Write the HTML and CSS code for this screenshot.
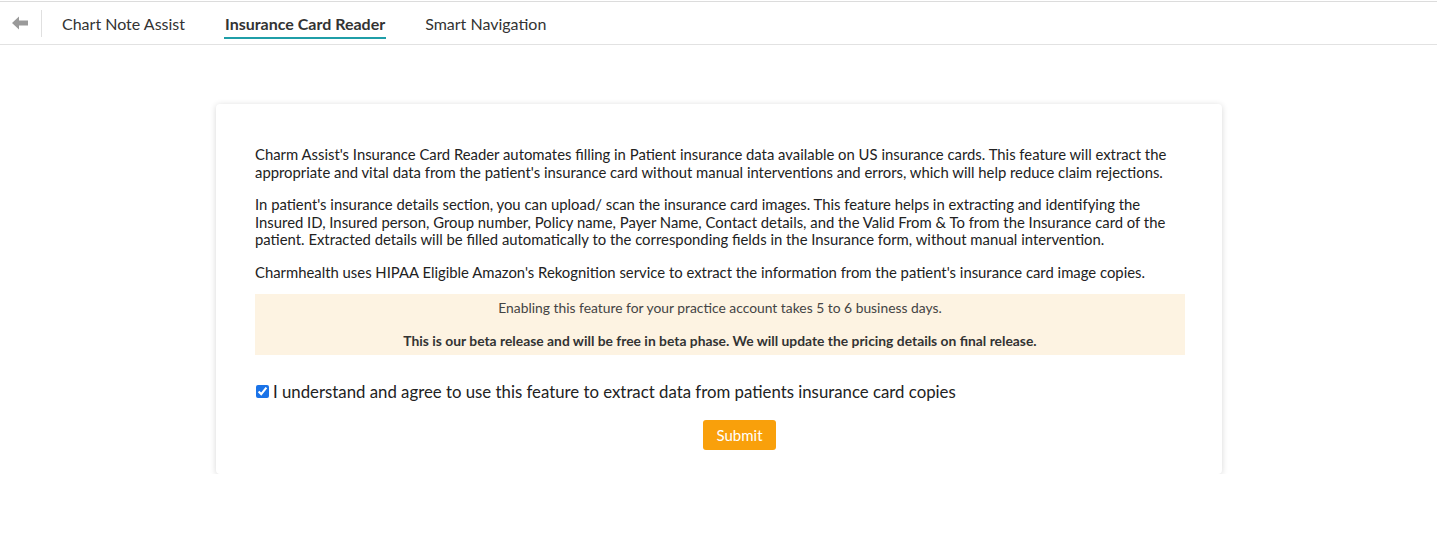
FILE: index.html
```html
<!DOCTYPE html>
<html>
<head>
<meta charset="utf-8">
<link rel="stylesheet" href="styles.css">
</head>
<body>
<div class="topbar">
  <div class="back">
    <svg width="16" height="14" viewBox="0 0 16 14"><path d="M0 7 L7 0.5 L7 4.5 L16 4.5 L16 9.5 L7 9.5 L7 13.5 Z" fill="#9a9a9a"/></svg>
  </div>
  <div class="divider"></div>
  <nav class="tabs">
    <a class="tab">Chart Note Assist</a>
    <a class="tab active">Insurance Card Reader</a>
    <a class="tab">Smart Navigation</a>
  </nav>
</div>
<main class="page">
  <section class="card">
    <p>Charm Assist's Insurance Card Reader automates filling in Patient insurance data available on US insurance cards. This feature will extract the appropriate and vital data from the patient's insurance card without manual interventions and errors, which will help reduce claim rejections.</p>
    <p>In patient's insurance details section, you can upload/ scan the insurance card images. This feature helps in extracting and identifying the Insured ID, Insured person, Group number, Policy name, Payer Name, Contact details, and the Valid From &amp; To from the Insurance card of the patient. Extracted details will be filled automatically to the corresponding fields in the Insurance form, without manual intervention.</p>
    <p class="last">Charmhealth uses HIPAA Eligible Amazon's Rekognition service to extract the information from the patient's insurance card image copies.</p>
    <div class="notice">
      <div>Enabling this feature for your practice account takes 5 to 6 business days.</div>
      <div class="notice-bold">This is our beta release and will be free in beta phase. We will update the pricing details on final release.</div>
    </div>
    <label class="agree"><input type="checkbox" checked> I understand and agree to use this feature to extract data from patients insurance card copies</label>
    <div class="actions"><button class="submit">Submit</button></div>
  </section>
</main>
</body>
</html>
```
FILE: styles.css
```css
html, body { margin: 0; padding: 0; background: #fff; }
body { padding-top: 1px; font-family: Lato, "Open Sans", sans-serif; color: #222; }
.topbar {
  display: flex; align-items: center; height: 42px;
  border-top: 1px solid #dcdcdc; border-bottom: 1px solid #e2e2e2;
}
.back { width: 41px; display: flex; justify-content: center; padding-left: 1px; box-sizing: border-box; padding-right: 3px; }
.back svg { display: block; }
.divider { width: 1px; height: 27px; background: #e0e0e0; }
.tabs { display: flex; margin-left: 20px; gap: 40px; height: 100%; }
.tab { font-size: 16px; color: #333; display: flex; align-items: center; position: relative; padding-top: 1px; box-sizing: border-box; }
.tab.active { font-weight: 700; color: #333; }
.tab.active::after { content: ""; position: absolute; left: -1px; right: -1px; bottom: 5px; height: 2px; background: #1f9ea8; }
.page { padding-top: 59px; padding-left: 216px; }
.card {
  width: 1006px; box-sizing: border-box; background: #fff; border-radius: 4px;
  box-shadow: 0 1px 6px rgba(0,0,0,0.16);
  padding: 42px 37px 24px 39px;
}
.card p { margin: 0 0 15px; font-size: 14.85px; line-height: 17.5px; color: #222; }
.card p.last { margin-bottom: 13px; }
.notice { background: #fdf3e2; text-align: center; font-size: 13.85px; color: #444; padding: 5px 10px 6px; line-height: 17px; }
.notice-bold { font-weight: 700; margin-top: 16px; color: #333; }
.agree { display: flex; align-items: center; font-size: 16.8px; color: #222; margin-top: 26px; }
.agree input { margin: 0 4px 0 1px; width: 13px; height: 13px; accent-color: #1a73e8; }
.actions { display: flex; padding-left: 448px; margin-top: 18px; }
.submit { background: #f9a00b; color: #fff; border: none; border-radius: 3px; font-family: Lato, sans-serif; font-size: 15px; width: 73px; height: 30px; padding: 0; }
```
